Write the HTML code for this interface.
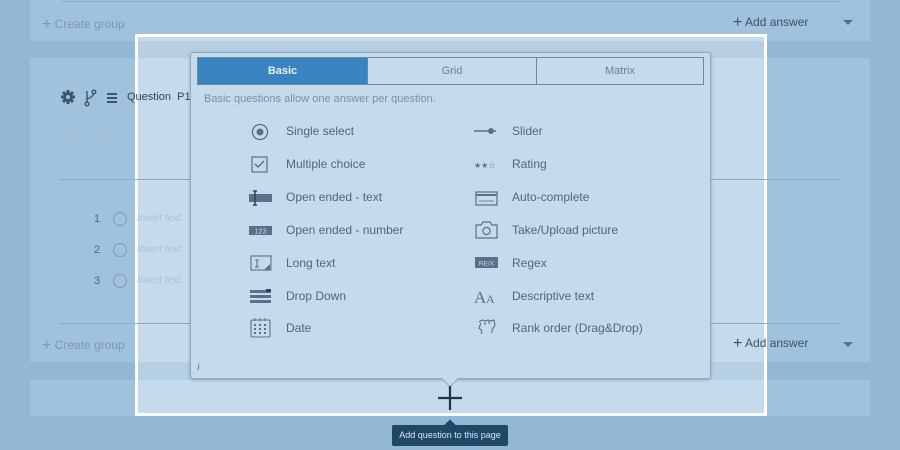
<!DOCTYPE html>
<html><head><meta charset="utf-8"><style>
*{margin:0;padding:0;box-sizing:border-box}
body{width:900px;height:450px;overflow:hidden;background:#93b8d5;font-family:"Liberation Sans",sans-serif;position:relative}
.a{position:absolute}
.card{position:absolute;left:30px;width:840px;background:#a0c2dd}
.t{position:absolute;white-space:nowrap}
.lc{position:absolute;background:#c5dbeb}
.it{position:absolute;font-size:12px;color:#50667c;white-space:nowrap}
.ic{position:absolute;width:24px;height:20px}
</style></head><body>
<div class="card" style="top:0;height:41px"></div>
<div class="card" style="top:58px;height:304px"></div>
<div class="card" style="top:380px;height:36px"></div>
<!-- highlight box -->
<div class="a" style="left:135px;top:34px;width:632px;height:382px;border:3px solid #fff;background:#b7cfe2"></div>
<div class="lc" style="left:138px;top:37px;width:626px;height:4px"></div>
<div class="lc" style="left:138px;top:58px;width:626px;height:304px"></div>
<div class="lc" style="left:138px;top:380px;width:626px;height:33px"></div>
<!-- lines -->
<div class="a" style="left:62px;top:1px;width:778px;height:1px;background:#8aaac4"></div>
<div class="a" style="left:60px;top:179px;width:780px;height:1px;background:#8aaac4"></div>
<div class="a" style="left:60px;top:323px;width:780px;height:1px;background:#8aaac4"></div>
<!-- card text -->
<div class="t" style="left:42px;top:15px;font-size:12px;color:#7d98b0"><span style="font-size:16px;position:relative;top:1px">+</span> Create group</div>
<div class="t" style="left:733px;top:13px;font-size:12px;color:#3d5268"><span style="font-size:16px;position:relative;top:1px">+</span> Add answer</div>
<div class="t" style="left:843px;top:20px;width:0;height:0;border:5px solid transparent;border-top:5px solid #56708a"></div>
<div class="t" style="left:42px;top:336px;font-size:12px;color:#7d98b0"><span style="font-size:16px;position:relative;top:1px">+</span> Create group</div>
<div class="t" style="left:733px;top:334px;font-size:12px;color:#3d5268"><span style="font-size:16px;position:relative;top:1px">+</span> Add answer</div>
<div class="t" style="left:843px;top:342px;width:0;height:0;border:5px solid transparent;border-top:5px solid #56708a"></div>
<svg class="a" style="left:60px;top:89px" width="80" height="18">
<g fill="#3f556b"><circle cx="8" cy="8" r="5"/><g stroke="#3f556b" stroke-width="3"><line x1="8" y1="1" x2="8" y2="15"/><line x1="1" y1="8" x2="15" y2="8"/><line x1="3" y1="3" x2="13" y2="13"/><line x1="13" y1="3" x2="3" y2="13"/></g><circle cx="8" cy="8" r="2" fill="#a0c2dd"/></g>
<g stroke="#3f556b" stroke-width="1.4" fill="none"><circle cx="27" cy="15" r="1.8"/><line x1="27" y1="13" x2="27" y2="2"/><path d="M27 10 Q33 8 34 4"/><circle cx="34" cy="3" r="1.8"/></g>
<g fill="#3f556b"><rect x="47" y="4" width="10" height="2"/><rect x="47" y="8" width="10" height="2"/><rect x="47" y="12" width="10" height="2"/></g>
</svg>
<div class="t" style="left:127px;top:91px;font-size:11px;color:#2f4459">Question&nbsp; P1</div>
<div class="t" style="left:62px;top:127px;font-size:10px;font-style:italic;color:#a9c2d6">Insert text...</div>
<div class="t" style="left:94px;top:213px;font-size:11px;color:#50667c">1</div>
<div class="t" style="left:94px;top:244px;font-size:11px;color:#50667c">2</div>
<div class="t" style="left:94px;top:275px;font-size:11px;color:#50667c">3</div>
<div class="a" style="left:113px;top:212px;width:14px;height:14px;border:1px solid #7f99b0;border-radius:50%"></div>
<div class="a" style="left:113px;top:243px;width:14px;height:14px;border:1px solid #7f99b0;border-radius:50%"></div>
<div class="a" style="left:113px;top:274px;width:14px;height:14px;border:1px solid #7f99b0;border-radius:50%"></div>
<div class="t" style="left:137px;top:213px;font-size:10px;font-style:italic;color:#a9c2d6">Insert text.</div>
<div class="t" style="left:137px;top:244px;font-size:10px;font-style:italic;color:#a9c2d6">Insert text.</div>
<div class="t" style="left:137px;top:275px;font-size:10px;font-style:italic;color:#a9c2d6">Insert text.</div>
<!-- popup -->
<div class="a" style="left:190px;top:52px;width:521px;height:327px;background:#c5dbeb;border:1px solid #8fa9bf;border-radius:3px;box-shadow:0 1px 3px rgba(60,90,120,.4)"></div>
<div class="a" style="left:444px;top:373px;width:12px;height:12px;background:#c5dbeb;transform:rotate(45deg);border-right:1px solid #8fa9bf;border-bottom:1px solid #8fa9bf"></div>
<div class="a" style="left:197px;top:57px;width:507px;height:28px;border:1px solid #6f8aa0;display:flex;font-size:11px">
<div style="flex:0 0 169px;background:#3a83c1;color:#e8f2fa;font-weight:bold;text-align:center;line-height:26px">Basic</div>
<div style="flex:0 0 169px;border-left:1px solid #6f8aa0;color:#6b8299;text-align:center;line-height:26px">Grid</div>
<div style="flex:1;border-left:1px solid #6f8aa0;color:#6b8299;text-align:center;line-height:26px">Matrix</div>
</div>
<div class="t" style="left:204px;top:93px;font-size:11px;color:#7890a5">Basic questions allow one answer per question.</div>
<div class="it" style="left:286px;top:124px">Single select</div>
<div class="it" style="left:286px;top:157px">Multiple choice</div>
<div class="it" style="left:286px;top:190px">Open ended - text</div>
<div class="it" style="left:286px;top:223px">Open ended - number</div>
<div class="it" style="left:286px;top:256px">Long text</div>
<div class="it" style="left:286px;top:289px">Drop Down</div>
<div class="it" style="left:286px;top:321px">Date</div>
<div class="it" style="left:512px;top:124px">Slider</div>
<div class="it" style="left:512px;top:157px">Rating</div>
<div class="it" style="left:512px;top:190px">Auto-complete</div>
<div class="it" style="left:512px;top:223px">Take/Upload picture</div>
<div class="it" style="left:512px;top:256px">Regex</div>
<div class="it" style="left:512px;top:289px">Descriptive text</div>
<div class="it" style="left:512px;top:321px">Rank order (Drag&amp;Drop)</div>
<svg class="a" style="left:245px;top:118px" width="270" height="225" fill="none" stroke="#5a7088">
<!-- left icons, centers x=15 -->
<circle cx="15" cy="14" r="7.5" stroke-width="1.3"/><circle cx="15" cy="14" r="3.5" fill="#5a7088" stroke="none"/>
<rect x="7" y="39" width="15" height="15" stroke-width="1.2"/><path d="M10 46 l3 3 l6 -6" stroke-width="1.5"/>
<rect x="4" y="76" width="23" height="8" fill="#5a7088" stroke="none"/><path d="M10 73 v14 M8 73 h4 M8 87 h4" stroke="#2f4459" stroke-width="1.5"/>
<rect x="4" y="108" width="23" height="9" fill="#5a7088" stroke="none"/><text x="15.5" y="115.5" font-size="7" fill="#c5dbeb" stroke="none" text-anchor="middle" font-family="Liberation Sans">123</text>
<rect x="6" y="138" width="20" height="14" stroke-width="1.1"/><path d="M10 142 h4 M12 142 v7 M10 149 h4" stroke-width="1.1"/><path d="M25 146 v6 h-6z" fill="#5a7088" stroke="none"/>
<g fill="#5a7088" stroke="none"><rect x="5" y="172" width="21" height="3"/><rect x="5" y="177" width="21" height="3"/><rect x="5" y="182" width="21" height="3"/><rect x="21" y="171" width="5" height="3" fill="#2f4459"/></g>
<rect x="6" y="202" width="19" height="17" rx="1.5" stroke-width="1.1"/><g fill="#5a7088" stroke="none"><rect x="9" y="206" width="2" height="2"/><rect x="14" y="206" width="2" height="2"/><rect x="19" y="206" width="2" height="2"/><rect x="9" y="210" width="2" height="2"/><rect x="14" y="210" width="2" height="2"/><rect x="19" y="210" width="2" height="2"/><rect x="9" y="214" width="2" height="2"/><rect x="14" y="214" width="2" height="2"/><rect x="19" y="214" width="2" height="2"/></g><path d="M10 200 v3 M15 200 v3 M20 200 v3"/>
<!-- right icons, centers x=241 -->
<path d="M229 13 h22" stroke-width="1.5"/><circle cx="246" cy="13" r="3" fill="#5a7088" stroke="none"/>
<text x="229" y="50" font-size="8" fill="#5a7088" stroke="none" font-family="DejaVu Sans">★★☆</text>
<rect x="231" y="74" width="21" height="13" stroke-width="1.2"/><path d="M231 77 h21" stroke-width="2"/><path d="M234 83 h15" stroke-width="0.8"/>
<path d="M231 107 h5 l2 -3 h7 l2 3 h5 v13 h-21z" stroke-width="1.2"/><circle cx="241.5" cy="113" r="3.6" stroke-width="1.2"/>
<rect x="230" y="139" width="23" height="11" fill="#5a7088" stroke="none"/><text x="241.5" y="147.5" font-size="6.5" fill="#c5dbeb" stroke="none" text-anchor="middle" font-family="Liberation Sans">RE/X</text>
<text x="229" y="185" font-size="17" fill="#5a7088" stroke="none" font-family="Liberation Serif">A</text><text x="241" y="185" font-size="12" fill="#5a7088" stroke="none" font-family="Liberation Serif">A</text>
<path d="M234 204 l3 -2 l3 1 l3 -1 l3 1 l3 -1 l1 5 l-3 5 l0 3 M236 205 l-2 5 l3 3 l-1 3 M240 204 v3 M244 203 v3" stroke-width="1.1"/>
</svg>
<div class="t" style="left:197px;top:362px;font-size:10px;font-style:italic;color:#5a7088;font-family:'Liberation Serif',serif">i</div>
<!-- plus -->
<svg class="a" style="left:437px;top:385px" width="26" height="26"><path d="M13 1 v24 M1 13 h24" stroke="#1e3346" stroke-width="2.2"/></svg>
<!-- tooltip -->
<div class="a" style="left:446px;top:421px;width:8px;height:8px;background:#1f4766;transform:rotate(45deg)"></div>
<div class="a" style="left:392px;top:425px;width:116px;height:21px;background:#1f4766;border-radius:2px;color:#d8e6f1;font-size:9px;line-height:21px;text-align:center">Add question to this page</div>
</body></html>
